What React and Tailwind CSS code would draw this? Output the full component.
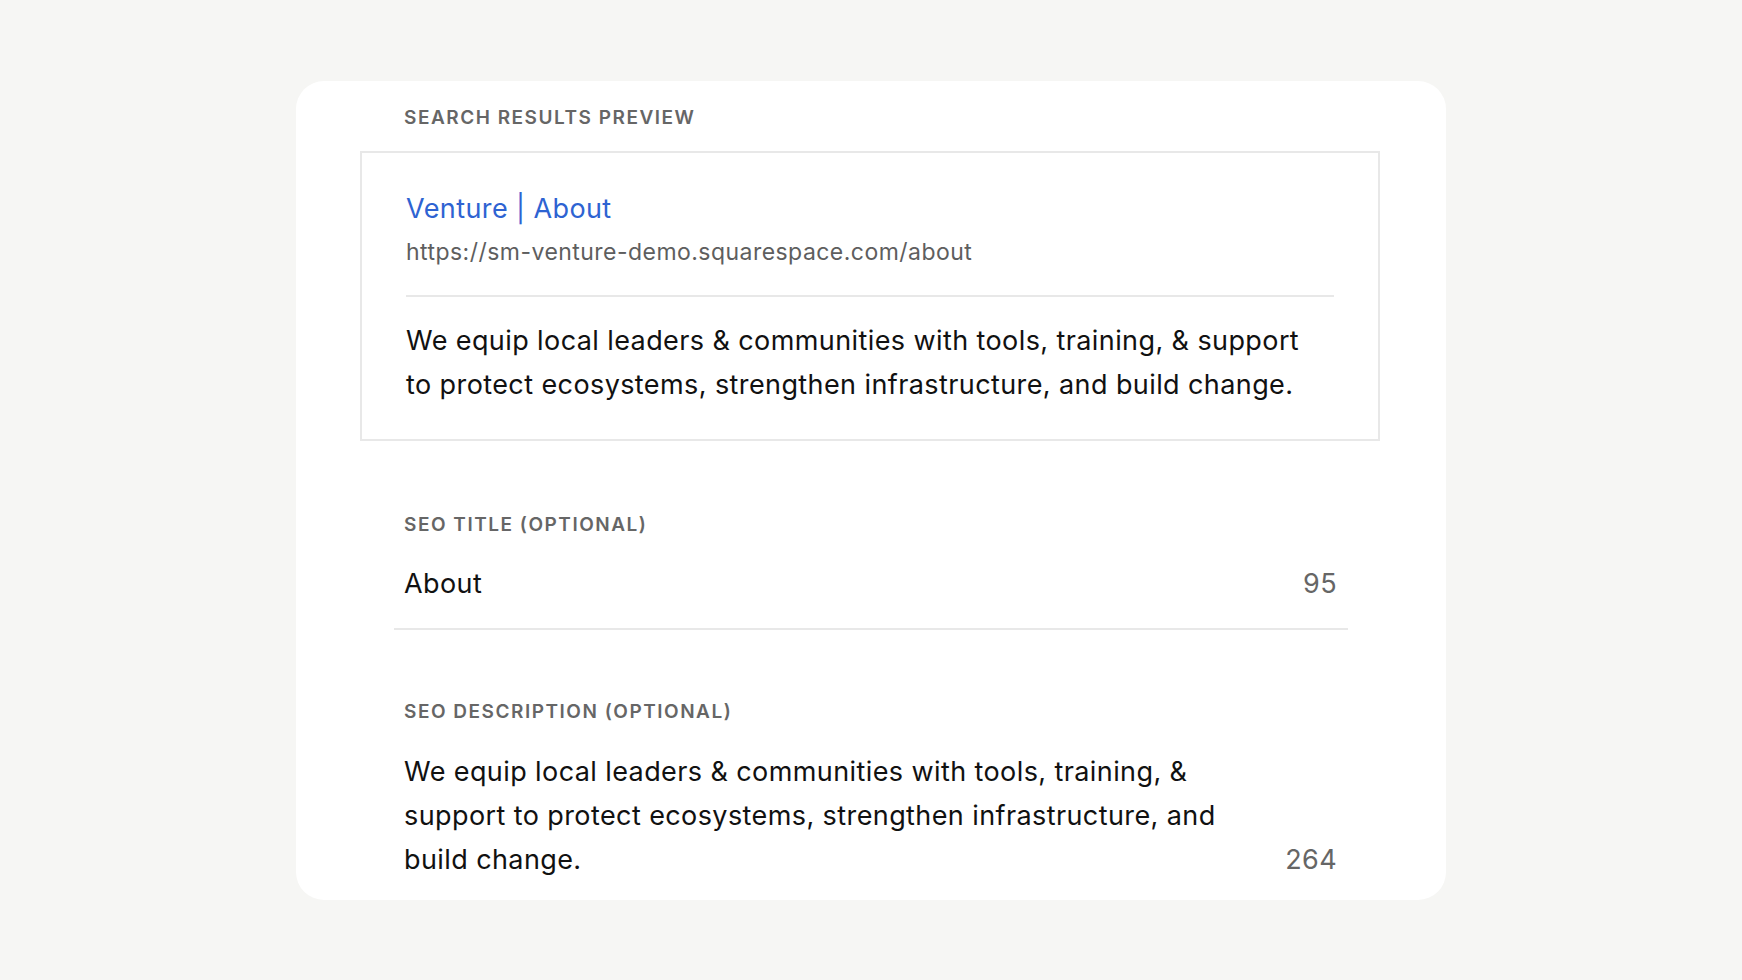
import React from 'react';

const font = { fontFamily: 'Inter, "Liberation Sans", sans-serif' };

const Label = ({ children }) => (
  <div className="pl-[44px] text-[19px] leading-[24px] font-semibold uppercase tracking-[0.08em] text-[#666666]">
    {children}
  </div>
);

const SearchPreview = () => (
  <div className="border-2 border-[#e8e8e8] px-[44px] pt-[40px] pb-[32px]">
    <div className="text-[27px] leading-[32px] tracking-[0.015em] text-[#2e63d2]">Venture | About</div>
    <div className="mt-[13px] text-[23px] leading-[28px] tracking-[0.02em] text-[#5e5e5e]">
      https://sm-venture-demo.squarespace.com/about
    </div>
    <div className="mt-[29px] h-[2px] bg-[#e8e8e8]" />
    <p className="mt-[22px] pr-[24px] text-[27px] leading-[44px] tracking-[0.015em] text-[#111111]">
      We equip local leaders &amp; communities with tools, training, &amp; support to protect
      ecosystems, strengthen infrastructure, and build change.
    </p>
  </div>
);

export default function App() {
  return (
    <div className="min-h-screen bg-[#f6f6f4] flex items-center justify-center" style={font}>
      <div className="w-[1150px] h-[819px] overflow-hidden rounded-[28px] bg-white pl-[64px] pr-[66px] pt-[25px]">
        <Label>Search Results Preview</Label>
        <div className="mt-[21px]">
          <SearchPreview />
        </div>

        {/* SEO title */}
        <div className="mt-[72px]">
          <Label>SEO Title (Optional)</Label>
          <div className="ml-[34px] mr-[32px] flex items-baseline justify-between border-b-2 border-[#e8e8e8] pl-[10px] pr-[11px] pt-[31px] pb-[28px]">
            <span className="text-[27px] leading-[32px] tracking-[0.015em] text-[#111111]">About</span>
            <span className="text-[27px] leading-[32px] tracking-[0.015em] text-[#666666]">95</span>
          </div>
        </div>

        {/* SEO description */}
        <div className="mt-[70px]">
          <Label>SEO Description (Optional)</Label>
          <div className="ml-[34px] mr-[32px] flex items-end justify-between pl-[10px] pr-[11px] pt-[26px]">
            <p className="w-[850px] text-[27px] leading-[44px] tracking-[0.015em] text-[#111111]">
              We equip local leaders &amp; communities with tools, training, &amp; support to protect
              ecosystems, strengthen infrastructure, and build change.
            </p>
            <span className="text-[27px] leading-[44px] tracking-[0.015em] text-[#666666]">264</span>
          </div>
        </div>
      </div>
    </div>
  );
}
